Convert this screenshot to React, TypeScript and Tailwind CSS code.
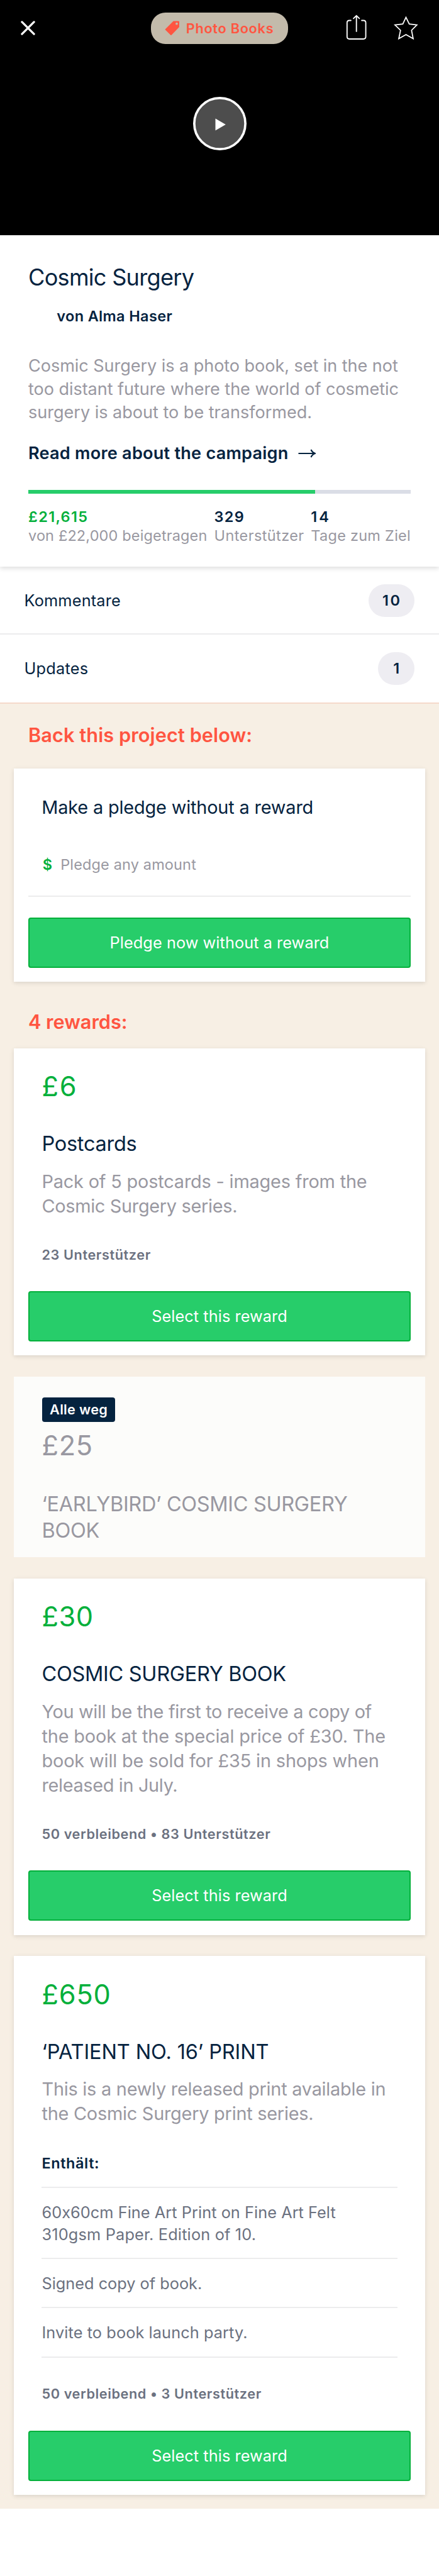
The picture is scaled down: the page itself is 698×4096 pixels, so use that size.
import type { ReactNode } from "react";

type Line = { text: string; tracking: string };

type Reward = {
  price: string;
  title: string;
  titleTracking: string;
  priceTracking: string;
  body: Line[];
  items?: Line[][];
  meta: string;
};

const rewards: Reward[] = [
  {
    price: "£30",
    priceTracking: "tracking-[0.52px]",
    title: "COSMIC SURGERY BOOK",
    titleTracking: "tracking-[-0.31px]",
    body: [
      { text: "You will be the first to receive a copy of", tracking: "tracking-[-0.34px]" },
      { text: "the book at the special price of £30. The", tracking: "tracking-[-0.17px]" },
      { text: "book will be sold for £35 in shops when", tracking: "tracking-[-0.15px]" },
      { text: "released in July.", tracking: "tracking-[-0.35px]" },
    ],
    meta: "50 verbleibend • 83 Unterstützer",
  },
  {
    price: "£650",
    priceTracking: "tracking-[0.84px]",
    title: "‘PATIENT NO. 16’ PRINT",
    titleTracking: "tracking-[-0.12px]",
    body: [
      { text: "This is a newly released print available in", tracking: "tracking-[-0.25px]" },
      { text: "the Cosmic Surgery print series.", tracking: "tracking-[-0.25px]" },
    ],
    items: [
      [
        { text: "60x60cm Fine Art Print on Fine Art Felt", tracking: "tracking-[0.05px]" },
        { text: "310gsm Paper. Edition of 10.", tracking: "tracking-[0.17px]" },
      ],
      [{ text: "Signed copy of book.", tracking: "tracking-[0px]" }],
      [{ text: "Invite to book launch party.", tracking: "tracking-[0.09px]" }],
    ],
    meta: "50 verbleibend • 3 Unterstützer",
  },
];

const postcards: Reward = {
  price: "£6",
  priceTracking: "tracking-[1.73px]",
  title: "Postcards",
  titleTracking: "tracking-[-0.28px]",
  body: [
    { text: "Pack of 5 postcards - images from the", tracking: "tracking-[-0.19px]" },
    { text: "Cosmic Surgery series.", tracking: "tracking-[-0.32px]" },
  ],
  meta: "23 Unterstützer",
};

function GreenButton({ children }: { children: ReactNode }) {
  return (
    <button className="mx-[22.4px] flex h-[80px] w-[608.6px] items-center justify-center rounded-[4px] border-2 border-[#04b03b] bg-[#27cd6a] text-[25.3px] leading-[36px] tracking-[0.06px] text-white">
      {children}
    </button>
  );
}

function Lines({ lines }: { lines: Line[] }) {
  return (
    <>
      {lines.map((l) => (
        <span key={l.text} className={`block ${l.tracking}`}>
          {l.text}
        </span>
      ))}
    </>
  );
}

function RewardCard({ reward }: { reward: Reward }) {
  return (
    <article className="mx-[22.3px] bg-white pt-[34.5px] pb-[22.3px] shadow-[0_2px_7px_rgba(0,0,0,0.12)]">
      <div className="px-[44.2px]">
        <p className={`text-[43.3px] leading-[52px] text-[#04b03b] ${reward.priceTracking}`}>{reward.price}</p>
        <h3 className={`mt-[44.8px] text-[32.5px] leading-[42.8px] text-[#05233f] ${reward.titleTracking}`}>
          {reward.title}
        </h3>
        <p className="mt-[17.9px] text-[28.9px] leading-[39.1px] text-[#9998a1]">
          <Lines lines={reward.body} />
        </p>
        {reward.items && (
          <>
            <p className="mt-[44.5px] text-[23.5px] leading-[30px] font-semibold tracking-[0.56px] text-[#05233f]">
              Enthält:
            </p>
            <ul className="mt-[22px] border-t-2 border-[#ececed] text-[25.3px] leading-[35.4px] text-[#6b7180]">
              {reward.items.map((item) => (
                <li key={item[0].text} className="border-b-2 border-[#ececed] pt-[20.7px] pb-[20px]">
                  <Lines lines={item} />
                </li>
              ))}
            </ul>
          </>
        )}
        <p className="mt-[43.9px] mb-[44.2px] text-[21.7px] leading-[28px] font-semibold tracking-[0.58px] text-[#6b7180]">
          {reward.meta}
        </p>
      </div>
      <GreenButton>Select this reward</GreenButton>
    </article>
  );
}

function Badge({ children, width }: { children: ReactNode; width: string }) {
  return (
    <span
      className={`flex h-[52px] items-center justify-center rounded-full bg-[#eeedf2] text-[23.5px] font-semibold ${width}`}
    >
      {children}
    </span>
  );
}

export default function App() {
  return (
    <div className="h-[4096px] w-[698px] overflow-hidden bg-white font-['Inter',sans-serif] whitespace-nowrap text-[#05233f] [font-feature-settings:'calt'_0]">
      <header className="h-[374px] bg-black pt-[19.5px]">
        <div className="flex h-[50.3px] items-center">
          <svg className="ml-[33px] h-[23px] w-[23px]" viewBox="0 0 24 24" fill="none" stroke="white" strokeWidth="3.4" strokeLinecap="round">
            <path d="M2 2L22 22M22 2L2 22" />
          </svg>
          <div className="ml-[184px] flex h-full w-[218.3px] items-center rounded-[23px] bg-[#c3bbab] pl-[21.6px] text-[#ff5541]">
            <svg className="h-[23.6px] w-[23.6px] shrink-0" viewBox="94 76 76 76">
              <path
                fill="currentColor"
                fillRule="evenodd"
                d="M138 78H165Q168 78 168 81V108L128 149.500Q126 151 124 149.500L97 123Q95 121 97 119ZM155 85a6 6 0 1 0 0 12a6 6 0 1 0 0-12Z"
              />
            </svg>
            <span className="ml-[10.5px] text-[21.7px] leading-[28px] font-semibold tracking-[0.73px]">Photo Books</span>
          </div>
          <svg className="-mt-[2px] ml-[90.8px] h-[42.8px] w-[35.4px]" viewBox="590 24 38 46" fill="none" stroke="white" strokeWidth="2" strokeLinecap="round" strokeLinejoin="round">
            <path d="M599.600 35.300H597Q593 35.300 593 39.300V63Q593 67 597 67H621Q625 67 625 63V39.300Q625 35.300 621 35.300H618" />
            <path d="M609 54V27.200M604 32L609 27L614 32" />
          </svg>
          <svg className="ml-[40.9px] h-[41px] w-[41px]" viewBox="672 26 44 44" fill="none" stroke="white" strokeWidth="1.9" strokeLinejoin="miter">
            <path d="M694 29.800L699.600 41.200L712.600 42.800L703.500 52L706.300 66.200L694 59.200L681.700 66.200L684.700 52L675.200 42.800L688.600 41.200Z" />
          </svg>
        </div>
        <svg className="mx-auto mt-[84.6px] h-[85px] w-[85px]" viewBox="0 0 91 91">
          <circle cx="45.500" cy="45.500" r="43.500" fill="#4d4d4d" stroke="white" strokeWidth="4" />
          <path d="M38 37L55.500 47L38 57.300Z" fill="white" />
        </svg>
      </header>

      <section className="relative z-10 h-[527px] bg-white px-[45px] pt-[43.3px] shadow-[0_3px_7px_rgba(0,0,0,0.13)]">
        <h1 className="text-[36.1px] leading-[48px] tracking-[-0.71px]">Cosmic Surgery</h1>
        <p className="mt-[21.3px] pl-[45.3px] text-[23.5px] leading-[32px] font-semibold tracking-[0.35px]">von Alma Haser</p>
        <p className="mt-[44.2px] text-[27.1px] leading-[37.2px] text-[#9998a1]">
          <span className="block tracking-[-0.07px]">Cosmic Surgery is a photo book, set in the not</span>
          <span className="block tracking-[-0.07px]">too distant future where the world of cosmetic</span>
          <span className="block tracking-[-0.03px]">surgery is about to be transformed.</span>
        </p>
        <a className="mt-[28.9px] flex items-center text-[27.1px] leading-[36px] font-semibold">
          <span className="tracking-[0.23px]">Read more about the campaign</span>
          <svg className="ml-[15px] h-[14px] w-[28px]" viewBox="0 0 28 14" fill="none" stroke="currentColor" strokeWidth="2.2">
            <path d="M0.500 7H26M20.500 1Q22.500 5.500 27 7Q22.500 8.500 20.500 13" />
          </svg>
        </a>
        <div className="mt-[40.1px] h-[6px] bg-[#dadde6]">
          <div className="h-full w-3/4 bg-[#27cd6a]" />
        </div>
        <dl className="mt-[21.3px] flex text-[23.5px] leading-[30px]">
          <div className="w-[296px]">
            <dt className="font-semibold tracking-[1.35px] text-[#04b03b]">£21,615</dt>
            <dd className="tracking-[0.14px] text-[#9998a1]">von £22,000 beigetragen</dd>
          </div>
          <div className="w-[154px]">
            <dt className="font-semibold tracking-[1.3px]">329</dt>
            <dd className="tracking-[0.4px] text-[#9998a1]">Unterstützer</dd>
          </div>
          <div>
            <dt className="font-semibold tracking-[3.07px]">14</dt>
            <dd className="tracking-[0.26px] text-[#9998a1]">Tage zum Ziel</dd>
          </div>
        </dl>
      </section>

      <nav className="text-[25.3px] leading-[36px]">
        <a className="flex h-[108px] items-center justify-between border-b-2 border-[#ececed] pt-[2px] pr-[39px] pl-[38.5px]">
          <span className="tracking-[0.18px]">Kommentare</span>
          <Badge width="w-[73.5px] pl-[2px] tracking-[2.6px]">10</Badge>
        </a>
        <a className="flex h-[109.8px] items-center justify-between border-b-2 border-[#f5d9cb] pr-[39px] pl-[38.5px]">
          <span className="tracking-[0.24px]">Updates</span>
          <Badge width="w-[57.7px]">1</Badge>
        </a>
      </nav>

      <main className="bg-[#f7efe4] pt-[29.9px] pb-[22.3px]">
        <h2 className="pl-[45px] text-[30.7px] leading-[40px] font-semibold tracking-[0.08px] text-[#ff5541]">
          Back this project below:
        </h2>
        <section className="mx-[22.3px] mt-[33.4px] bg-white pt-[43.3px] pb-[22.1px] shadow-[0_2px_7px_rgba(0,0,0,0.12)]">
          <h3 className="px-[44px] text-[28.9px] leading-[38px] tracking-[-0.17px]">Make a pledge without a reward</h3>
          <div className="mx-[22.4px] mt-[56.5px] flex border-b-2 border-[#ececed] pb-[34.1px] pl-[23px] text-[23.5px] leading-[30px]">
            <span className="w-[28.5px] font-semibold text-[#04b03b]">$</span>
            <span className="tracking-[0.14px] text-[#9998a1]">Pledge any amount</span>
          </div>
          <div className="mt-[33.4px]">
            <GreenButton>Pledge now without a reward</GreenButton>
          </div>
        </section>

        <h2 className="mt-[43.2px] pl-[45px] text-[30.7px] leading-[40px] font-semibold tracking-[-0.05px] text-[#ff5541]">
          4 rewards:
        </h2>
        <div className="mt-[22.2px] flex flex-col gap-[33.5px]">
          <RewardCard reward={postcards} />
          <article className="mx-[22.3px] h-[287.6px] bg-[#fcfcfa] px-[44.2px] pt-[33.5px] text-[#9998a1]">
            <span className="ml-[0.5px] flex h-[38.2px] w-[116.3px] items-center justify-center rounded-[4px] bg-[#05233f] text-[21.7px] font-semibold tracking-[0.31px] text-white">
              Alle weg
            </span>
            <p className="mt-[11.9px] text-[43.3px] leading-[52px] tracking-[0.72px]">£25</p>
            <h3 className="mt-[46.1px] text-[32.5px] leading-[42.8px] tracking-[-0.35px]">
              <span className="block">‘EARLYBIRD’ COSMIC SURGERY</span>
              <span className="block">BOOK</span>
            </h3>
          </article>
          {rewards.map((r) => (
            <RewardCard key={r.price} reward={r} />
          ))}
        </div>
      </main>
    </div>
  );
}
